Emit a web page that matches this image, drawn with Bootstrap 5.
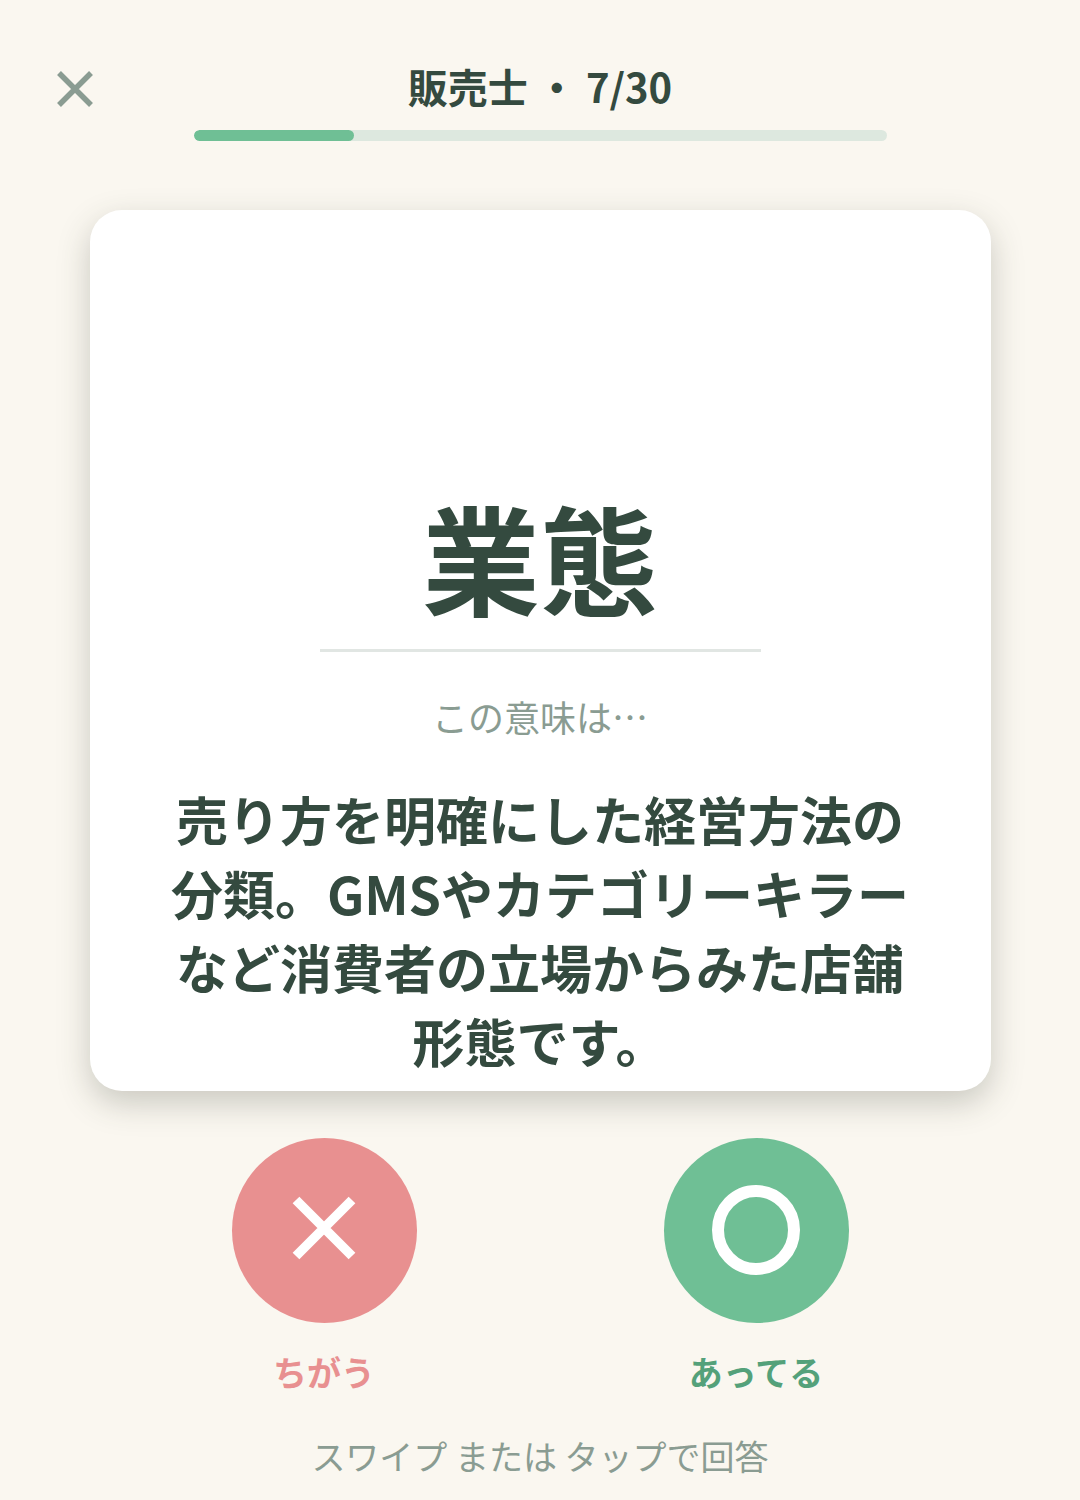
<!DOCTYPE html>
<html lang="ja">
<head>
<meta charset="utf-8">
<title>販売士</title>
<link href="https://cdn.jsdelivr.net/npm/bootstrap@5.3.0/dist/css/bootstrap.min.css" rel="stylesheet">
<style>
html,body{height:100%;}
body{background:#faf7f0;color:#344a3f;font-family:"Noto Sans CJK JP","Noto Sans",sans-serif;width:1080px;height:1500px;overflow:hidden;}
.topzone{height:210px;padding-top:60px;position:relative;}
.closeb{position:absolute;left:56px;top:69.500px;width:38px;height:38px;padding:0;border:0;background:none;line-height:0;}
.ttl{font-size:40px;font-weight:700;line-height:53px;height:53px;letter-spacing:0;}
.meter{width:693px;height:11px;margin:17px auto 0;background:#dde8df;border-radius:6px;overflow:hidden;}
.meter-fill{height:100%;background:#6fbf95;border-radius:6px;}
.flash{width:901px;height:881px;margin:0 auto;border-radius:32px;background:#fff;box-shadow:0 12px 32px rgba(60,65,50,.25);overflow:hidden;padding:0 80px 13px;}
.word{font-size:118px;font-weight:700;line-height:1;margin:0;}
.rule{width:441px;height:3px;background:#e1e6e3;margin:34px auto 0;}
.hint{font-size:36px;line-height:48px;color:#8a9c92;margin-top:40px;font-weight:400;}
.meaning{font-size:52px;font-weight:700;line-height:74px;margin-top:42px;}
.acts{padding-top:47px;}
.actcol{width:185px;}
.roundb{width:185px;height:185px;border-radius:50%;border:0;padding:0;}
.rb-no{background:#e89090;padding-bottom:6px;}
.rb-yes{background:#6fbf95;padding-bottom:1px;}
.lbl{font-size:34px;font-weight:700;line-height:44px;margin-top:27px;white-space:nowrap;}
.lbl-no{color:#e89090;}
.lbl-yes{color:#54a17a;}
.foot{font-size:34px;line-height:44px;color:#8a9c92;margin-top:40px;}
.actgap{gap:247px;}
</style>
</head>
<body>
<div class="topzone text-center">
<button class="closeb" type="button" aria-label="閉じる"><svg width="38" height="38" viewBox="0 0 38 38"><path d="M3 3L35 35M35 3L3 35" stroke="#8a9c92" stroke-width="5.500" fill="none"/></svg></button>
<div class="ttl">販売士 ・ 7/30</div>
<div class="meter"><div class="meter-fill" style="width:23.1%"></div></div>
</div>
<div class="flash d-flex flex-column justify-content-end text-center">
<h1 class="word">業態</h1>
<div class="rule"></div>
<div class="hint">この意味は…</div>
<div class="meaning">売り方を明確にした経営方法の分類。GMSやカテゴリーキラーなど消費者の立場からみた店舗形態です。</div>
</div>
<div class="acts text-center">
<div class="d-flex justify-content-center actgap">
<div class="actcol d-flex flex-column align-items-center">
<button class="roundb rb-no d-flex align-items-center justify-content-center" type="button" aria-label="ちがう"><svg width="64" height="64" viewBox="0 0 64 64"><path d="M4 4L60 60M60 4L4 60" stroke="#fff" stroke-width="9.500" fill="none"/></svg></button>
<div class="lbl lbl-no">ちがう</div>
</div>
<div class="actcol d-flex flex-column align-items-center">
<button class="roundb rb-yes d-flex align-items-center justify-content-center" type="button" aria-label="あってる"><svg width="90" height="90" viewBox="0 0 90 90"><ellipse cx="45" cy="45" rx="38" ry="39" stroke="#fff" stroke-width="12" fill="none"/></svg></button>
<div class="lbl lbl-yes">あってる</div>
</div>
</div>
<div class="foot">スワイプ または タップで回答</div>
</div>
</body>
</html>
